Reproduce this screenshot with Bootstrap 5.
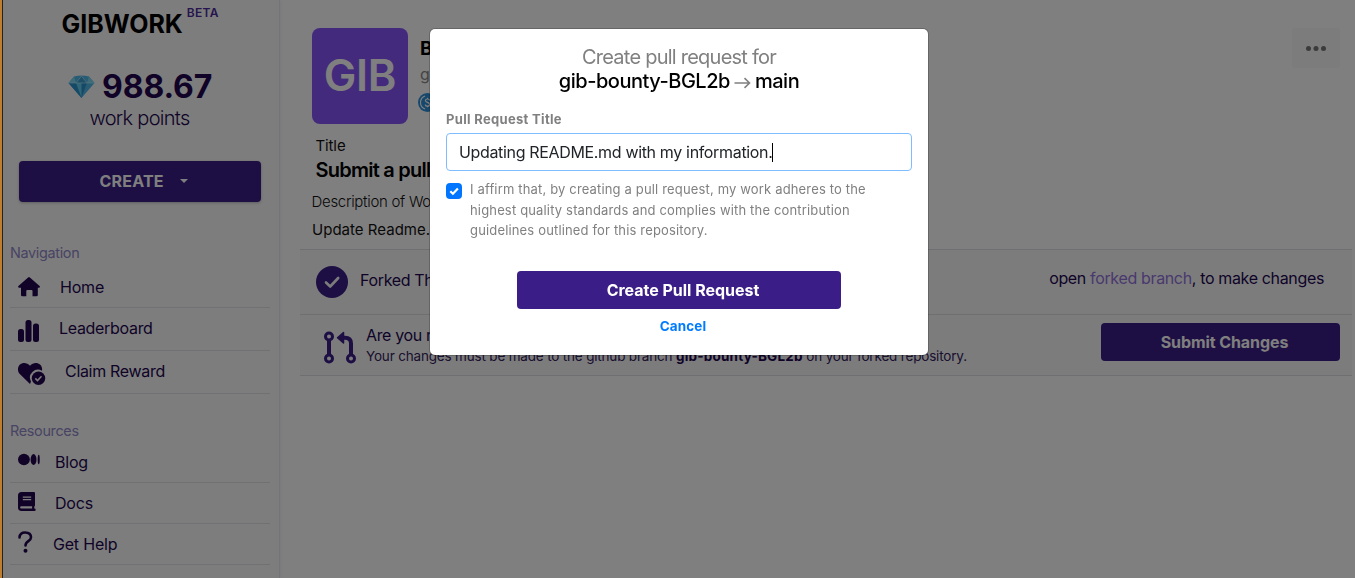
<!DOCTYPE html>
<html lang="en">
<head>
<meta charset="utf-8">
<meta name="viewport" content="width=device-width, initial-scale=1">
<title>Gibwork</title>
<link href="https://cdn.jsdelivr.net/npm/bootstrap@5.3.0/dist/css/bootstrap.min.css" rel="stylesheet">
<style>
:root{--ink:#22074f;--brand:#3b1d87}
body{font-family:Inter,"Liberation Sans",sans-serif;font-size:16px;line-height:24px;color:#111;background:#fff;height:578px;overflow:hidden;white-space:nowrap}
svg{flex:none;display:block}
.edge{width:3px;background:#c07d2c;border-right:1px solid #222;position:relative;z-index:2}
/* sidebar */
.side{width:277px;background:#fbfbfb;border-right:1px solid #e9e9ec;color:var(--ink);box-shadow:1px 0 3px rgba(0,0,0,.06)}
.logo{font-size:25px;font-weight:700;line-height:30px;color:#000;padding:9px 0 0 58.5px}
.beta{font-size:12px;font-weight:600;line-height:14px;color:#4c2a9c;letter-spacing:.25px;padding:6px 0 0 4px}
.points{font-size:32px;font-weight:700;line-height:36px;letter-spacing:-.1px;margin:30px 0 0 64.5px;gap:7.5px}
.points svg{margin-bottom:1px}
.wp{font-size:20px;font-weight:300;line-height:28px;letter-spacing:-.71px;margin:-1px 0 0 86.5px}
.create{margin:29px 18px 0 16px;height:41px;border-radius:4px;background:var(--brand);color:#fff;font-weight:700;letter-spacing:.2px;padding:0 0 1px 80.5px;box-shadow:0 1px 3px rgba(0,0,0,.25)}
.tri{border:4px solid transparent;border-top-color:#fff;border-bottom:0;margin-left:16px}
.sec{font-size:14.4px;line-height:20px;letter-spacing:-.32px;color:#9088c8;margin-left:7px}
.sec-nav{margin-top:41px}
.sec-res{margin-top:27px}
.item{margin:0 9px 0 7px;padding-left:8px;border-bottom:1px solid #e2e2e6;letter-spacing:-.2px}
.item svg{fill:currentColor}
.i-home{height:45px;padding-top:4px}
.i-tall{height:43px;letter-spacing:-.31px}
.i-tall span{padding-bottom:2px}
.i-blog{height:42px}
.i-low{height:41px}
/* bounty page */
.head{padding:28px 15px 0 32px;height:134px}
.tile{width:96px;height:96px;border-radius:8px;background:#8654f8;color:#fff;font-size:43.500px;font-weight:600;letter-spacing:-.2px;padding-bottom:3px}
.who{padding:8.500px 0 0 10px;color:#888}
.who strong{font-size:19px;color:#000;padding-left:2px}
.who span{padding:1px 0 0 2px}
.who svg{margin-top:7px}
.more{width:48px;height:40px;border-radius:4px;background:#f8f8f8}
.t-label{font-size:15px;letter-spacing:-.12px;margin-left:35.500px}
.t-title{font-size:20px;font-weight:600;letter-spacing:-.75px;color:#000;margin-left:35.500px}
.t-desc{font-size:15px;font-weight:300;letter-spacing:-.3px;margin:8px 0 0 31.500px}
.t-body{font-size:15px;letter-spacing:.02px;margin:4px 0 0 32px;height:31px}
.rowx{background:#f9f9fb;border-top:1px solid #dedee3;color:var(--ink);margin:0 3px 0 20px;letter-spacing:-.35px}
.forked{height:65px;padding:0 28px 0 16px}
.forked a{color:#9272da}
.lbl-forked{padding:0 0 4px 12px}
.lbl-ready{padding-left:10px}
.lbl-ready div:first-child{line-height:22px}
.ready{height:62px;border-bottom:1px solid #dedee3;padding:0 12px 0 24px}
.ready .note{font-size:13.5px;line-height:21px;letter-spacing:-.18px;color:#35235c}
.note b{letter-spacing:.2px;color:var(--ink)}
.submit{width:239px;height:38px;border-radius:4px;background:var(--brand);color:#fff;font-weight:700;letter-spacing:-.08px;margin-bottom:6px;padding-left:8px}
/* dialog */
.shade{position:fixed;inset:0;background:rgba(0,0,0,.5)}
.dlg{position:fixed;left:430px;top:29px;width:498px;height:326px;background:#fff;border-radius:5px;box-shadow:0 0 0 1px rgba(0,0,0,.2);padding:16px;color:#808080}
.d-head{font-size:20px;letter-spacing:-.76px}
.d-head b{font-weight:500;color:#000;letter-spacing:-.48px}
.d-label{font-size:13px;font-weight:700;line-height:20px;letter-spacing:.32px;margin-top:16px}
.field{height:38px;border:1px solid #80bdff;border-radius:4px;color:#212529;padding-left:12px;letter-spacing:-.34px;margin-top:4px}
.caret{width:1px;height:19px;background:#000}
.tick{width:16px;height:16px;border-radius:4px;background:#0075ff;margin-top:4px}
.affirm{font-size:13px;line-height:20.5px;letter-spacing:.16px;margin:8px 0 0}
.go{width:324px;height:38px;border-radius:4px;background:var(--brand);color:#fff;font-weight:700;letter-spacing:-.02px;margin:30px auto 0;padding-left:8px}
.cancel{font-size:13.5px;font-weight:700;letter-spacing:.1px;line-height:20px;color:#007bff;margin-top:7.5px;padding-left:8px}
</style>
</head>
<body class="d-flex">
<div class="edge flex-shrink-0"></div>
<aside class="side flex-shrink-0">
  <div class="d-flex">
    <div class="logo">GIBWORK</div>
    <div class="beta">BETA</div>
  </div>
  <div class="points d-flex align-items-center">
    <svg width="27" height="23" viewBox="0 0 27 23">
      <path d="M6 1.5Q13.500-.5 21 1.500L26.500 8 13.500 23 .5 8z" fill="#50b8e8"/>
      <path d="M6 1.500 8 8H.5zM21 1.500 19 8h7.500z" fill="#7fd6f2"/>
      <path d="M8 8l5.500-6.500L19 8z" fill="#3f9fd0"/>
      <path d="M8 8h11l-5.500 15z" fill="#62ccf2"/>
      <path d="M.5 8H8l5.500 15zM13.500 23V8H19z" fill="#2c93cc"/>
      <path d="M1 8h25M8 8l5.500-7L19 8" stroke="#b5f0fa" stroke-width=".6" fill="none"/>
    </svg>
    <span>988.67</span>
  </div>
  <div class="wp">work points</div>
  <div class="create d-flex align-items-center"><span>CREATE</span><i class="tri"></i></div>

  <div class="sec sec-nav">Navigation</div>
  <div class="item i-home d-flex align-items-center">
    <svg class="me-3" width="26" height="20" viewBox="0 0 26 20"><path d="M10.100.5a1.300 1.300 0 0 1 1.800 0l9.700 8.500c.8.800.3 1.800-.6 1.800h-1.200V18a1.300 1.300 0 0 1-1.300 1.300h-4V14a1 1 0 0 0-1-1H9.300a1 1 0 0 0-1 1v5.300h-4A1.300 1.300 0 0 1 3 18v-7.200H1C.1 10.800-.3 9.800.4 9z"/></svg>
    <span>Home</span>
  </div>
  <div class="item i-tall d-flex align-items-center">
    <svg class="me-3 mt-1" width="25" height="22" viewBox="0 0 25 22"><rect y="9" width="6" height="13" rx="2.500"/><rect x="7.500" width="6" height="22" rx="2.500"/><rect x="15" y="3.500" width="6" height="18.500" rx="2.500"/></svg>
    <span>Leaderboard</span>
  </div>
  <div class="item i-tall d-flex align-items-center">
    <svg class="me-3 mt-1" width="31" height="22" viewBox="0 0 31 22"><path d="M12 21 1.800 11C-.8 8.300-.5 4 1.700 1.800 4.500-.8 9-.6 12 2.700 15-.6 19.400-.8 22.300 1.800 24 3.500 24.400 5.800 24 7.700A8 8 0 0 0 13 18.500z"/><circle cx="20.500" cy="15.300" r="6.700"/><path d="m17.300 15.400 2.200 2.200 4-4.300" fill="none" stroke="#fbfbfb" stroke-width="1.500"/></svg>
    <span>Claim Reward</span>
  </div>

  <div class="sec sec-res">Resources</div>
  <div class="item i-blog d-flex align-items-center">
    <svg class="me-3 mb-1" width="21" height="13" viewBox="0 0 22 14" preserveAspectRatio="none" overflow="visible"><circle cx="6.200" cy="7" r="6.200"/><ellipse cx="16.300" cy="7" rx="3.100" ry="5.900"/><ellipse cx="21.700" cy="7" rx="1.100" ry="5.200"/></svg>
    <span>Blog</span>
  </div>
  <div class="item i-low d-flex align-items-center">
    <svg class="me-3 mb-1" width="21" height="19" viewBox="0 0 21 19"><path fill-rule="evenodd" d="M3.500 0H16a1 1 0 0 1 1 1v12.500a1 1 0 0 1-.7 1v2.100h.2a1.200 1.200 0 0 1 0 2.400H3.500A3.500 3.500 0 0 1 0 15.500v-12A3.500 3.500 0 0 1 3.500 0zM3.300 14.300a1.100 1.100 0 0 0 0 2.300h10.800v-2.300zM4.800 4.500v1.200h8.400V4.500zm0 2.600v1.200h8.400V7.100z"/></svg>
    <span>Docs</span>
  </div>
  <div class="item i-low d-flex align-items-center">
    <svg class="me-3 mb-1" width="19" height="22" viewBox="0 0 19 22"><path d="M1.500 6.500C1.500 3 4 1.500 7 1.500c3.500 0 6 1.600 6 4.700 0 4.300-5.500 3.600-5.500 8.300" fill="none" stroke="currentColor" stroke-width="2.600" stroke-linecap="round"/><circle cx="7.500" cy="19.800" r="2"/></svg>
    <span>Get Help</span>
  </div>
</aside>

<main class="flex-grow-1">
  <div class="head d-flex align-items-start">
    <div class="tile d-flex align-items-center justify-content-center">GIB</div>
    <div class="who d-flex flex-column flex-grow-1">
      <strong>Bounty</strong>
      <span>gibwork</span>
      <svg width="19" height="19" viewBox="0 0 20 20"><circle cx="10" cy="10" r="10" fill="#2c8fd8"/><path d="M7.500 3.200a7.200 7.200 0 0 0 0 13.600M12.500 3.200a7.200 7.200 0 0 1 0 13.600" stroke="#fff" stroke-width="1.200" fill="none"/><path d="M12.200 8c0-1.200-.9-1.700-2.200-1.700S7.800 7 7.800 8c0 2.500 4.500 1.300 4.500 4 0 1.200-1 1.800-2.300 1.800S7.700 13.200 7.700 12M10 5v1.300M10 13.800V15" stroke="#fff" stroke-width="1.200" fill="none"/></svg>
    </div>
    <div class="more d-flex align-items-center justify-content-center"><svg width="20" height="6" viewBox="0 0 20 6"><g fill="#777"><circle cx="2.500" cy="3.500" r="2.500"/><circle cx="10" cy="3.500" r="2.500"/><circle cx="17.500" cy="3.500" r="2.500"/></g></svg></div>
  </div>
  <div class="t-label">Title</div>
  <div class="t-title">Submit a pull request</div>
  <div class="t-desc">Description of Work</div>
  <div class="t-body">Update Readme.md</div>

  <div class="rowx forked d-flex align-items-center">
    <svg width="32" height="32" viewBox="0 0 32 32"><circle cx="16" cy="16" r="16" fill="#3b1d87"/><path d="m10 16.500 4.200 4 8-8.500" fill="none" stroke="#f9f9fb" stroke-width="2.600" stroke-linecap="round" stroke-linejoin="round"/></svg>
    <span class="lbl-forked flex-grow-1">Forked The Repository</span>
    <span class="pb-2">open <a class="text-decoration-none" href="#">forked branch</a>, to make changes</span>
  </div>
  <div class="rowx ready d-flex align-items-center">
    <svg class="mt-1" width="32" height="33" viewBox="0 0 32 33" fill="none" stroke="#3b1d87"><g stroke-width="3"><circle cx="5" cy="5.500" r="3.500"/><circle cx="5" cy="27.500" r="3.500"/><circle cx="27" cy="27.500" r="3.500"/></g><path d="M5 9v15M27 24V12.500Q27 6.800 21 6.800H18" stroke-width="4"/><path d="M19.500 1.500v10.500L13.500 6.800z" fill="#3b1d87" stroke-width="1.500" stroke-linejoin="round"/></svg>
    <div class="lbl-ready flex-grow-1">
      <div>Are you ready to submit?</div>
      <div class="note">Your changes must be made to the github branch <b>gib-bounty-BGL2b</b> on your forked repository.</div>
    </div>
    <div class="submit d-flex align-items-center justify-content-center">Submit Changes</div>
  </div>
</main>

<div class="shade"></div>
<div class="dlg" role="dialog">
  <div class="d-head text-center">Create pull request for<br><b>gib-bounty-BGL2b</b><svg class="d-inline-block mx-1" width="17" height="12" viewBox="0 0 17 12"><path d="M.5 6h15M10.500 1.200 15.500 6l-5 4.800" fill="none" stroke="#808080" stroke-width="1.600"/></svg><b>main</b></div>
  <div class="d-label">Pull Request Title</div>
  <div class="field d-flex align-items-center">Updating README.md with my information.<i class="caret"></i></div>
  <div class="affirm d-flex">
    <svg class="tick" viewBox="0 0 16 16"><path d="m4.300 8.300 2.600 2.500 5-5.200" fill="none" stroke="#fff" stroke-width="2.200"/></svg>
    <div class="ps-2">I affirm that, by creating a pull request, my work adheres to the<br>highest quality standards and complies with the contribution<br>guidelines outlined for this repository.</div>
  </div>
  <div class="go d-flex align-items-center justify-content-center">Create Pull Request</div>
  <div class="cancel text-center">Cancel</div>
</div>
<script src="https://cdn.jsdelivr.net/npm/bootstrap@5.3.0/dist/js/bootstrap.bundle.min.js"></script>
</body>
</html>
